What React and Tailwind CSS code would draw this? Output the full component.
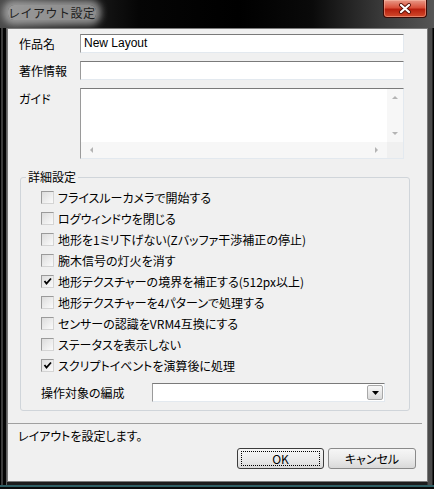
import React from "react";

const font = "font-['Noto_Sans_CJK_JP','Noto_Sans',sans-serif] [font-feature-settings:'palt']";

const options = [
  { label: "フライスルーカメラで開始する", checked: false },
  { label: "ログウィンドウを閉じる", checked: false },
  { label: "地形を1ミリ下げない(Zバッファ干渉補正の停止)", checked: false },
  { label: "腕木信号の灯火を消す", checked: false },
  { label: "地形テクスチャーの境界を補正する(512px以上)", checked: true },
  { label: "地形テクスチャーを4パターンで処理する", checked: false },
  { label: "センサーの認識をVRM4互換にする", checked: false },
  { label: "ステータスを表示しない", checked: false },
  { label: "スクリプトイベントを演算後に処理", checked: true },
];

const TextBox = ({ value, className = "" }) => (
  <div
    className={`h-[19px] border border-t-[#7a7a7a] border-l-[#9a9a9a] border-r-[#e3e9ef] border-b-[#e3e9ef] bg-white pl-[3px] text-[12px] leading-[17px] text-black font-['Liberation_Sans',sans-serif] ${className}`}
  >
    {value}
  </div>
);

const CheckBox = ({ checked }) => (
  <div className="relative h-[13px] w-[13px] border border-t-[#9a9a9a] border-l-[#9a9a9a] border-r-[#d4d4d4] border-b-[#d4d4d4] bg-gradient-to-br from-[#dcdcdc] to-[#fbfbfb]">
    {checked && (
      <svg viewBox="0 0 11 11" className="absolute left-0 top-0 h-[11px] w-[11px]">
        <polyline points="2.5,5 4.5,7.5 9,2.5" fill="none" stroke="#000" strokeWidth="1.8" />
      </svg>
    )}
  </div>
);

const Arrow = ({ dir }) => {
  const pts = {
    up: "1,5 4,2 7,5",
    down: "1,3 4,6 7,3",
    left: "5,1 2,4 5,7",
    right: "3,1 6,4 3,7",
  }[dir];
  return (
    <svg viewBox="0 0 8 8" className="h-[8px] w-[8px]">
      <polygon points={pts} fill="#b4b4b4" />
    </svg>
  );
};

const Button = ({ children, focused }) => (
  <div
    className={`flex h-[21px] items-center justify-center rounded-[3px] border bg-gradient-to-b from-[#f6f6f6] via-[#ebebeb] to-[#d9d9d9] text-[12px] text-black ${
      focused ? "w-[87px] border-[#3c3c3c]" : "w-[88px] border-[#8a8a8a]"
    }`}
  >
    {focused ? (
      <div className="flex h-[15px] w-[79px] items-center justify-center border border-dotted border-black leading-none">
        {children}
      </div>
    ) : (
      <span className="leading-none">{children}</span>
    )}
  </div>
);

export default function App() {
  return (
    <div
      className={`flex h-[489px] w-[434px] flex-col overflow-hidden bg-[linear-gradient(to_right,#000_0px,#000_1px,#3c3c3c_1px,#3c3c3c_3px,#050505_3px,#050505_6px,#5e5e5e_6px,#5e5e5e_7px,#1c1c1c_7px,#1c1c1c_427px,#4a4a4a_428px,#4a4a4a_432px,#000_433px)] shadow-[inset_0_-2px_0_#0a0a0a,inset_0_-4px_0_#2f5f65] ${font}`}
    >
      {/* title bar */}
      <div className="flex h-[28px] shrink-0 items-start justify-between bg-[linear-gradient(to_right,#4a4a4a,#2a2a2a_12%,#050505_32%,#000_55%,#0a0a0a_72%,#3a3a3a_88%,#555_100%)] pl-[8px] pr-[7px]">
        <div className="mt-[5px] rounded-[6px] bg-[rgba(190,190,190,0.7)] text-[12px] leading-[15px] tracking-[0.5px] text-[#1e1e1e] shadow-[0_0_7px_5px_rgba(190,190,190,0.7)] [font-feature-settings:normal]">
          レイアウト設定
        </div>
        <div className="flex h-[18px] w-[44px] items-center justify-center rounded-b-[4px] border border-t-0 border-[#3a0a05] bg-[linear-gradient(to_bottom,#e89a88,#d9503a_45%,#b8200e_55%,#d24a2c)] shadow-[inset_0_0_0_1px_rgba(255,200,180,0.45)]">
          <svg viewBox="0 0 14 11" className="h-[11px] w-[14px]">
            <path d="M3 2 L11 9 M11 2 L3 9" stroke="#5a1208" strokeWidth="4" strokeLinecap="round" />
            <path d="M3 2 L11 9 M11 2 L3 9" stroke="#fff" strokeWidth="2.2" strokeLinecap="round" />
          </svg>
        </div>
      </div>

      {/* client area */}
      <div className="mb-[7px] ml-[7px] mr-[6px] flex flex-1 flex-col border border-[#7a7a7a] bg-[#f0f0f0] text-[12px] leading-[14px] text-black">
        <div className="mt-[5px] flex items-center">
          <span className="w-[72px] shrink-0 pl-[11px]">作品名</span>
          <TextBox value="New Layout" className="w-[324px]" />
        </div>
        <div className="mt-[8px] flex items-center">
          <span className="w-[72px] shrink-0 pl-[11px]">著作情報</span>
          <TextBox className="w-[324px]" />
        </div>
        <div className="mt-[8px] flex items-start">
          <span className="mt-[4px] w-[72px] shrink-0 pl-[11px]">ガイド</span>
          <div className="flex h-[71px] w-[324px] flex-col border border-t-[#7a7a7a] border-l-[#9a9a9a] border-r-[#e3e9ef] border-b-[#e3e9ef] bg-white">
            <div className="flex flex-1">
              <div className="flex-1" />
              <div className="flex w-[16px] flex-col items-center justify-between bg-[#f7f7f7] py-[5px]">
                <Arrow dir="up" />
                <Arrow dir="down" />
              </div>
            </div>
            <div className="flex h-[16px]">
              <div className="flex flex-1 items-center justify-between bg-[#f7f7f7] px-[7px]">
                <Arrow dir="left" />
                <Arrow dir="right" />
              </div>
              <div className="w-[16px] bg-[#f0f0f0]" />
            </div>
          </div>
        </div>

        {/* detail group */}
        <fieldset className="ml-[12px] mt-[11px] w-[390px] rounded-[3px] border border-[#d0d5da] pb-[8px] pt-[3px]">
          <legend className="ml-[5px] px-[2px] leading-[14px]">詳細設定</legend>
          {options.map((o) => (
            <div key={o.label} className="flex h-[21px] items-center pl-[20px]">
              <CheckBox checked={o.checked} />
              <span className="ml-[4px] whitespace-nowrap">{o.label}</span>
            </div>
          ))}
          <div className="mt-[7px] flex h-[19px] items-center pl-[20px]">
            <span className="w-[111px] shrink-0">操作対象の編成</span>
            <div className="flex h-[19px] w-[233px] items-stretch justify-end border border-t-[#7a7a7a] border-l-[#9a9a9a] border-r-[#e3e9ef] border-b-[#e3e9ef] bg-white p-[1px]">
              <div className="flex w-[16px] items-center justify-center rounded-[2px] border border-[#a8a8a8] bg-gradient-to-b from-[#f8f8f8] to-[#dadada]">
                <svg viewBox="0 0 7 4" className="h-[4px] w-[7px]">
                  <polygon points="0,0 7,0 3.5,4" fill="#000" />
                </svg>
              </div>
            </div>
          </div>
        </fieldset>

        <div className="mr-[5px] mt-[12px] h-px bg-[#a0a0a0]" />
        <div className="ml-[10px] mt-[5px]">レイアウトを設定します。</div>
        <div className="mr-[11px] mt-[5px] flex justify-end gap-[4px]">
          <Button focused>OK</Button>
          <Button>キャンセル</Button>
        </div>
      </div>
    </div>
  );
}
